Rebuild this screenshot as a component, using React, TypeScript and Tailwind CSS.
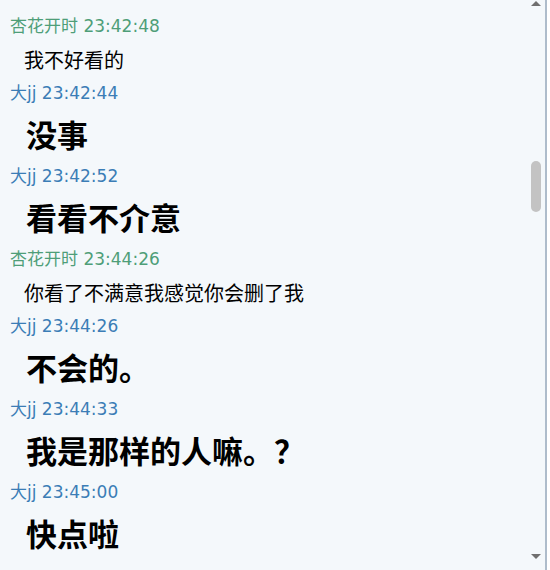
import React from 'react';

type Msg = { who: 'xh' | 'dj'; time: string; text: string; big: boolean };

const NAMES = { xh: '杏花开时', dj: '大jj' };

const messages: Msg[] = [
  { who: 'xh', time: '23:42:48', text: '我不好看的', big: false },
  { who: 'dj', time: '23:42:44', text: '没事', big: true },
  { who: 'dj', time: '23:42:52', text: '看看不介意', big: true },
  { who: 'xh', time: '23:44:26', text: '你看了不满意我感觉你会删了我', big: false },
  { who: 'dj', time: '23:44:26', text: '不会的。', big: true },
  { who: 'dj', time: '23:44:33', text: '我是那样的人嘛。？', big: true },
  { who: 'dj', time: '23:45:00', text: '快点啦', big: true },
];

const headFont = { fontFamily: '"DejaVu Sans", "Noto Sans CJK SC", sans-serif' };
const cjkFont = { fontFamily: '"Noto Sans CJK SC", sans-serif' };

const Arrow: React.FC<{ down?: boolean }> = ({ down }) => (
  <svg width="10" height="5" viewBox="0 0 10 5" className="block">
    {down ? <path d="M0 0 H10 L5 5 Z" fill="#6f6f6f" /> : <path d="M0 5 H10 L5 0 Z" fill="#6f6f6f" />}
  </svg>
);

export default function App() {
  return (
    <div className="w-[550px] h-[570px] overflow-hidden flex bg-[#f4f8fb]">
      {/* messages */}
      <div className="flex-1 overflow-hidden">
        <div className="flex flex-col -mt-[28px]">
          {/* tail of the previous message, scrolled mostly out of view */}
          <div className="h-[41px] pt-[6px] pl-[24px] text-[20px] leading-[24px] text-black" style={cjkFont}>
            你要看吗
          </div>
          {messages.map((m, i) => (
            <React.Fragment key={i}>
              <div
                className={`h-[26px] pl-[10px] text-[17px] leading-[26px] whitespace-nowrap ${
                  m.who === 'xh' ? 'text-[#4e9e78]' : 'text-[#3b7db6]'
                }`}
                style={headFont}
              >
                {NAMES[m.who]} {m.time}
              </div>
              {m.big ? (
                <div
                  className="h-[57px] pt-[10px] pl-[26px] text-[31px] leading-[36px] font-bold text-black whitespace-nowrap"
                  style={cjkFont}
                >
                  {m.text}
                </div>
              ) : (
                <div
                  className="h-[41px] pt-[9px] pl-[24px] text-[20px] leading-[24px] text-black whitespace-nowrap"
                  style={cjkFont}
                >
                  {m.text}
                </div>
              )}
            </React.Fragment>
          ))}
        </div>
      </div>

      {/* scrollbar */}
      <div className="w-[17px] flex flex-col items-center pr-[2px]">
        <div className="pt-[1px]">
          <Arrow />
        </div>
        <div className="mt-[155px] w-[10px] h-[51px] rounded-[5px] bg-[#c3c3c3]" />
        <div className="flex-1" />
        <div className="pb-[11px]">
          <Arrow down />
        </div>
      </div>
      <div className="w-[2px] bg-[#aebccb]" />
      <div className="w-[3px] bg-white" />
    </div>
  );
}
